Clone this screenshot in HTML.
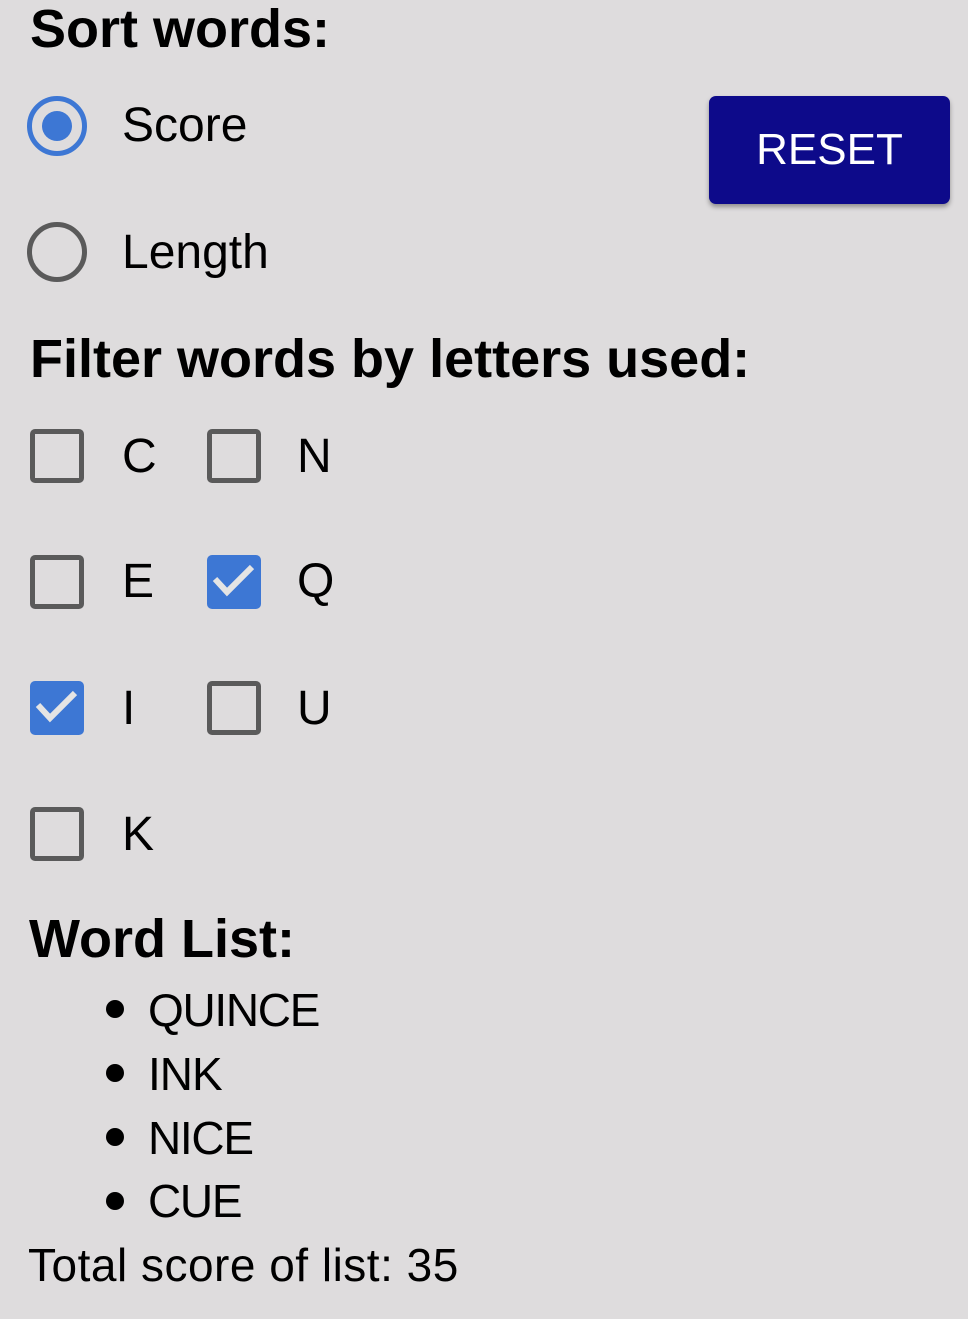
<!DOCTYPE html>
<html><head><style>
html,body{margin:0;padding:0}
body{width:968px;height:1319px;background:#dedcdd;position:relative;overflow:hidden;font-family:"Liberation Sans",sans-serif;color:#000}
.t{position:absolute;white-space:nowrap;line-height:1}
.h{font-weight:bold;font-size:54px}
.l{font-size:48px}
.w{font-size:46px}
.cb{position:absolute;width:44px;height:44px;border:5px solid #5a5a5a;border-radius:5px}
.cb.on{border-color:#3d77d4;background:#3d77d4}
.cb.on svg{position:absolute;left:-5px;top:-5px}
.b{position:absolute;left:106px;width:18px;height:18px;border-radius:50%;background:#000}
</style></head><body>
<div class="t h" style="left:30px;top:2px">Sort words:</div>

<div style="position:absolute;left:27px;top:96px;width:50px;height:50px;border:5px solid #3d77d4;border-radius:50%"></div>
<div style="position:absolute;left:42px;top:111px;width:30px;height:30px;background:#3d77d4;border-radius:50%"></div>
<div class="t l" style="left:122px;top:102px">Score</div>
<div style="position:absolute;left:27px;top:222px;width:50px;height:50px;border:5px solid #5a5a5a;border-radius:50%"></div>
<div class="t l" style="left:122px;top:229px">Length</div>

<div style="position:absolute;left:709px;top:96px;width:241px;height:108px;background:#0d0a8a;border-radius:7px;box-shadow:0 3px 5px rgba(0,0,0,.35);color:#fff;font-size:44px;line-height:108px;text-align:center">RESET</div>

<div class="t h" style="left:30px;top:332px">Filter words by letters used:</div>

<div class="cb" style="left:30px;top:429px"></div><div class="t l" style="left:122px;top:433px">C</div>
<div class="cb" style="left:207px;top:429px"></div><div class="t l" style="left:297px;top:433px">N</div>
<div class="cb" style="left:30px;top:555px"></div><div class="t l" style="left:122px;top:558px">E</div>
<div class="cb on" style="left:207px;top:555px"><svg width="54" height="54"><path d="M8 24 L20 37 L45 12" fill="none" stroke="#e4e4e4" stroke-width="6"/></svg></div><div class="t l" style="left:297px;top:558px">Q</div>
<div class="cb on" style="left:30px;top:681px"><svg width="54" height="54"><path d="M8 24 L20 37 L45 12" fill="none" stroke="#e4e4e4" stroke-width="6"/></svg></div><div class="t l" style="left:122px;top:685px">I</div>
<div class="cb" style="left:207px;top:681px"></div><div class="t l" style="left:297px;top:685px">U</div>
<div class="cb" style="left:30px;top:807px"></div><div class="t l" style="left:122px;top:811px">K</div>

<div class="t h" style="left:29px;top:912px">Word List:</div>
<div class="b" style="top:1000px"></div><div class="t w" style="left:148px;top:987px;letter-spacing:-1.3px">QUINCE</div>
<div class="b" style="top:1064px"></div><div class="t w" style="left:148px;top:1051px;letter-spacing:-1px">INK</div>
<div class="b" style="top:1128px"></div><div class="t w" style="left:148px;top:1115px;letter-spacing:-1.3px">NICE</div>
<div class="b" style="top:1192px"></div><div class="t w" style="left:148px;top:1178px;letter-spacing:-1.3px">CUE</div>
<div class="t w" style="left:28px;top:1242px;letter-spacing:0.5px">Total score of list: 35</div>
</body></html>
